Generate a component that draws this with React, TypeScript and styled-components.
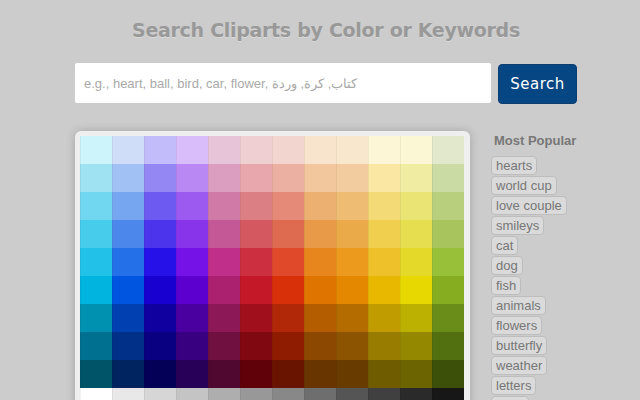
import React from 'react'
import styled, { createGlobalStyle } from 'styled-components'

const GlobalStyle = createGlobalStyle`
  html, body {
    margin: 0;
    padding: 0;
    background: #cccccc;
    overflow: hidden;
  }
`

const rows: string[][] = [
  ['#cdf3fb', '#cfddf9', '#c3bcfa', '#d9bcfa', '#e8c4d8', '#f0cfd2', '#f3d5d0', '#f8e3cc', '#f8e6cd', '#fdf6d6', '#fbf7d4', '#e1e8cc'],
  ['#9fe3f3', '#a1c1f5', '#9487f3', '#ba88f3', '#dc9ec0', '#e8a7ac', '#ebb0a2', '#f2c79e', '#f2cc9e', '#f9e7a3', '#f0eda2', '#cadba4'],
  ['#71d7f0', '#76a6f0', '#6d5af0', '#9c5af0', '#d07aa8', '#dc7f84', '#e58a78', '#ecb070', '#eebc72', '#f4da76', '#eae474', '#b8d07e'],
  ['#48ccec', '#4c88ec', '#4c34ec', '#8834ea', '#c45896', '#d45860', '#de6a50', '#e89a48', '#eaaa4a', '#f0cf4e', '#e6de4e', '#a8c45c'],
  ['#22c1e8', '#2470e8', '#2612e8', '#7412e8', '#c0308a', '#cc3040', '#e04a2a', '#e8861e', '#eb9a1e', '#eec02a', '#e4d828', '#98c038'],
  ['#00b4e0', '#0055e0', '#1800d0', '#5c00d0', '#ac2070', '#c41828', '#d83008', '#e07400', '#e48800', '#e8b800', '#e6d800', '#86ac20'],
  ['#0090b0', '#0040b0', '#1000a0', '#4a00a0', '#8c1858', '#a0101c', '#b02808', '#b45c00', '#b46c00', '#c09c00', '#bcb000', '#6a8c18'],
  ['#007090', '#003088', '#080080', '#380080', '#701040', '#800810', '#901c00', '#8c4800', '#8c5400', '#987c00', '#948800', '#527010'],
  ['#005468', '#002460', '#040058', '#280058', '#500830', '#600008', '#681400', '#683400', '#683c00', '#705c00', '#6c6400', '#3c500a'],
  ['#ffffff', '#e8e8e8', '#d6d6d6', '#c4c4c4', '#aeaeae', '#989898', '#888888', '#6e6e6e', '#555555', '#404040', '#2a2a2a', '#171717'],
]

const popular = ['hearts', 'world cup', 'love couple', 'smileys', 'cat', 'dog', 'fish', 'animals', 'flowers', 'butterfly', 'weather', 'letters', 'birds']

const Page = styled.div`
  width: 502px;
  margin-left: 75px;
  padding-top: 16px;
`

const Title = styled.h1`
  margin: 0;
  text-align: center;
  font-family: 'DejaVu Sans', Verdana, sans-serif;
  font-size: 19px;
  font-weight: bold;
  letter-spacing: -0.3px;
  color: #999999;
  text-shadow: 0 1px 0 #d8d8d8;
  line-height: 28px;
`

const SearchRow = styled.form`
  display: flex;
  align-items: flex-start;
  gap: 7px;
  margin-top: 19px;
`

const SearchInput = styled.input`
  box-sizing: border-box;
  width: 416px;
  height: 40px;
  border: none;
  border-radius: 2px;
  background: #ffffff;
  padding: 0 9px;
  font-family: 'Liberation Sans', Arial, sans-serif;
  font-size: 13px;
  color: #555;
  outline: none;
  &::placeholder {
    color: #a9a9a9;
  }
`

const SearchButton = styled.button`
  box-sizing: border-box;
  width: 79px;
  height: 40px;
  margin-top: 1px;
  border: 1px solid #0a3f73;
  border-radius: 4px;
  background: #064683;
  color: #ffffff;
  font-family: 'DejaVu Sans', Verdana, sans-serif;
  font-size: 15px;
  letter-spacing: 0.5px;
  padding: 0;
`

const Body = styled.div`
  display: flex;
  align-items: flex-start;
  gap: 21px;
  margin-top: 27px;
`

const Panel = styled.div`
  box-sizing: border-box;
  width: 395px;
  padding: 5px;
  background: #efefef;
  border-radius: 6px;
  box-shadow: 0 0 10px rgba(0, 0, 0, 0.2);
`

const Grid = styled.div`
  display: grid;
  grid-template-columns: repeat(12, 32px);
  grid-auto-rows: 28px;
`

const Swatch = styled.div<{ $c: string }>`
  background: ${({ $c }) => $c};
  box-shadow: inset 1px 0 0 rgba(0, 0, 0, 0.05);
`

const Sidebar = styled.div`
  display: flex;
  flex-direction: column;
  align-items: flex-start;
  padding-top: 2px;
`

const SideTitle = styled.div`
  font-family: 'Liberation Sans', Arial, sans-serif;
  font-size: 13px;
  font-weight: bold;
  color: #777777;
  margin-left: 3px;
  margin-bottom: 7px;
  line-height: 16px;
`

const Tag = styled.span`
  box-sizing: border-box;
  height: 19px;
  line-height: 17px;
  margin-bottom: 1px;
  padding: 0 4px;
  border: 1px solid #bdbdbd;
  border-radius: 4px;
  background: #dadada;
  font-family: 'Liberation Sans', Arial, sans-serif;
  font-size: 13px;
  color: #777777;
`

export default function App() {
  return (
    <>
      <GlobalStyle />
      <Page>
        <Title>Search Cliparts by Color or Keywords</Title>
        <SearchRow onSubmit={(e) => e.preventDefault()}>
          <SearchInput placeholder="e.g., heart, ball, bird, car, flower, كتاب, كرة, وردة" />
          <SearchButton type="submit">Search</SearchButton>
        </SearchRow>
        <Body>
          <Panel>
            <Grid>
              {rows.map((row, r) => row.map((c, i) => <Swatch key={`${r}-${i}`} $c={c} />))}
            </Grid>
          </Panel>
          <Sidebar>
            <SideTitle>Most Popular</SideTitle>
            {popular.map((t) => (
              <Tag key={t}>{t}</Tag>
            ))}
          </Sidebar>
        </Body>
      </Page>
    </>
  )
}
